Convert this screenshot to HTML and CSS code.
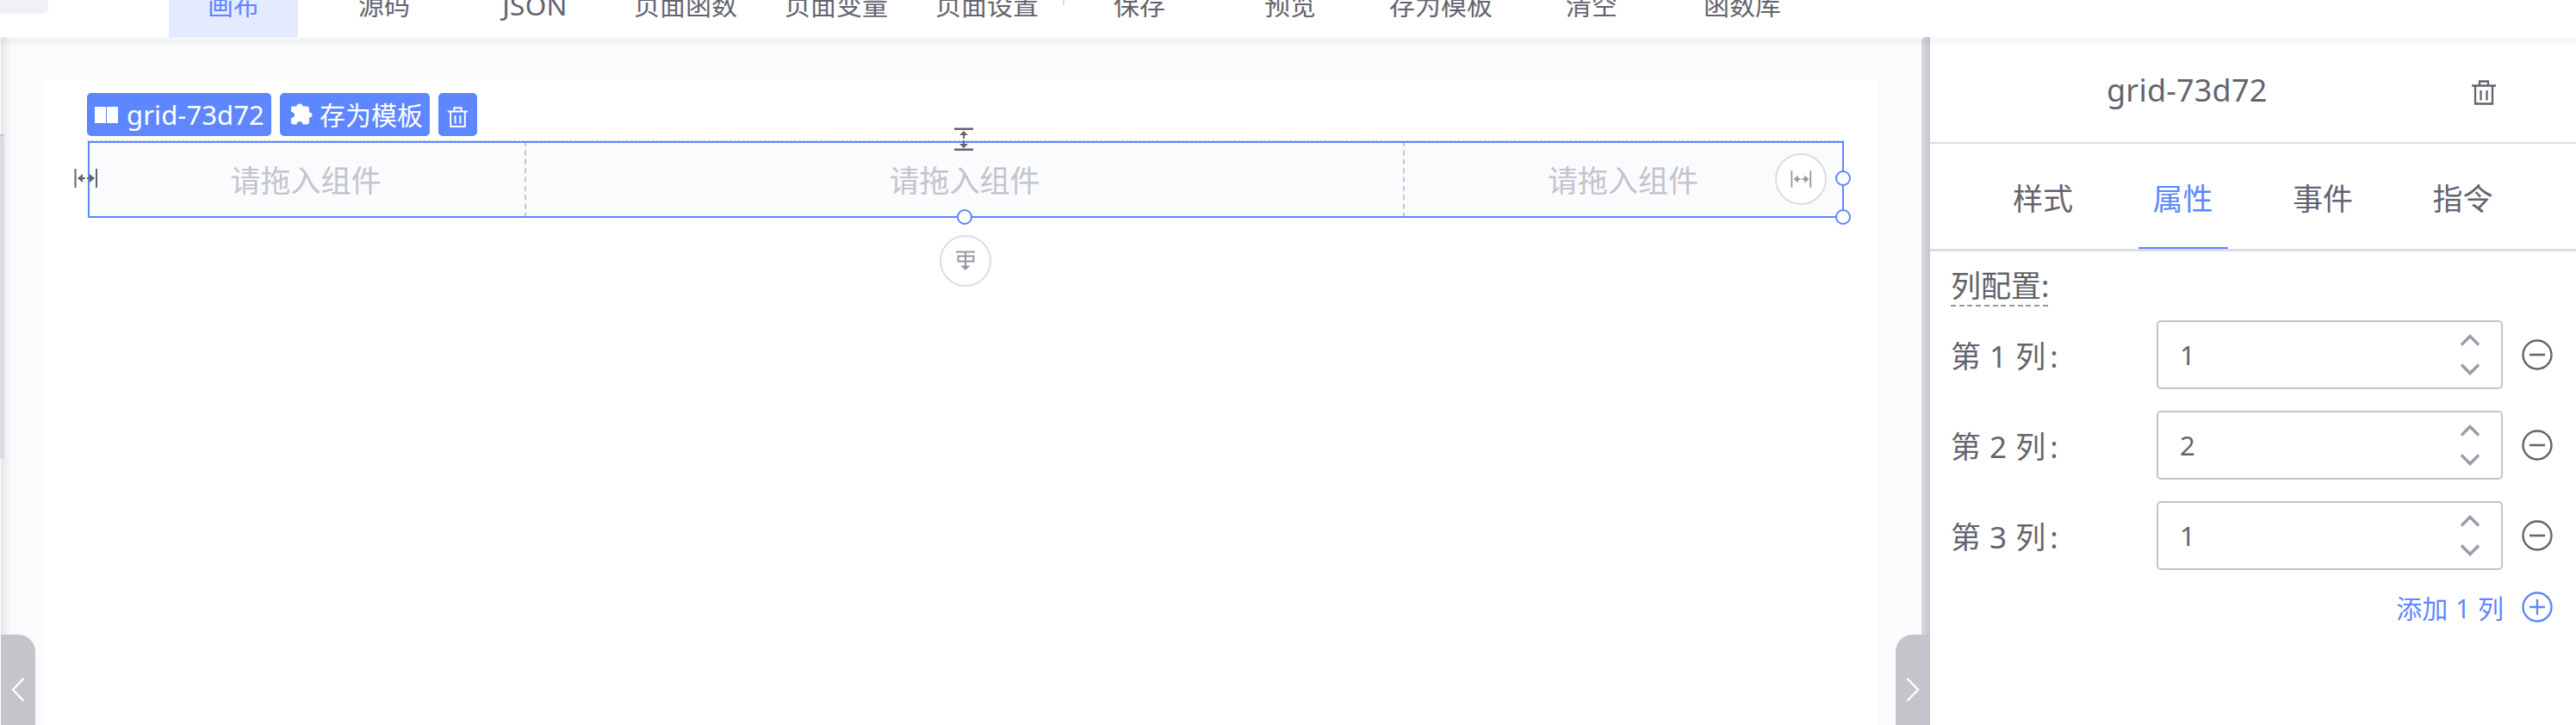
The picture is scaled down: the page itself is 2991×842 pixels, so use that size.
FILE: index.html
```html
<!DOCTYPE html>
<html lang="zh-CN">
<head>
<meta charset="utf-8">
<title>grid-73d72</title>
<link rel="stylesheet" href="styles.css">
</head>
<body>
<svg class="defs" width="0" height="0">
  <symbol id="trash" viewBox="0 0 30 30"><path d="M1 6.500h28M10 6V1.500h10V6M5 7v20.500h20V7M11.500 12v11.500M18.500 12v11.500" fill="none" stroke="currentColor" stroke-width="2.300"/></symbol>
  <symbol id="hspan" viewBox="0 0 28 22"><path d="M1.500 0v22M26 0v22" stroke="currentColor" stroke-width="2" fill="none"/><path d="M4 11l6-5v4h3v2h-3v4zM24 11l-6-5v4h-3v2h3v4z" fill="currentColor"/></symbol>
  <symbol id="vspan" viewBox="0 0 22 28"><path d="M0 1.800h22M0 25.800h22" stroke="currentColor" stroke-width="2.400" fill="none"/><path d="M11 4l5 5h-4v4h-2V9H6zM11 24l5-5h-4v-4h-2v4H6z" fill="currentColor"/></symbol>
  <symbol id="down" viewBox="0 0 24 24"><path d="M1 1.500h22M12 1.500V19M3.500 6.500h18v6h-18z" stroke="currentColor" stroke-width="2" fill="none"/><path d="M6.500 17.500h11L12 23z" fill="currentColor"/></symbol>
  <symbol id="minus" viewBox="0 0 36 36"><path d="M9 18h18" stroke="currentColor" stroke-width="2.600"/><circle cx="18" cy="18" r="16.500" fill="none" stroke="currentColor" stroke-width="2.400"/></symbol>
  <symbol id="plus" viewBox="0 0 36 36"><path d="M9 18h18M18 9v18" stroke="currentColor" stroke-width="2.400"/><circle cx="18" cy="18" r="16.500" fill="none" stroke="currentColor" stroke-width="2.400"/></symbol>
  <symbol id="spin" viewBox="0 0 22 48"><path d="M1 12.500L11 2.500L21 12.500M1 35.500L11 45.500L21 35.500" fill="none" stroke="currentColor" stroke-width="3.400"/></symbol>
</svg>
<div class="app">
  <header class="topbar">
    <div class="logo"></div>
    <nav class="menu">
      <span class="item active"><b>画布</b></span>
      <span class="item"><b>源码</b></span>
      <span class="item"><b class="latin">JSON</b></span>
      <span class="item"><b>页面函数</b></span>
      <span class="item"><b>页面变量</b></span>
      <span class="item"><b>页面设置</b></span>
      <i class="sep"></i>
      <span class="item"><b>保存</b></span>
      <span class="item"><b>预览</b></span>
      <span class="item"><b>存为模板</b></span>
      <span class="item"><b>清空</b></span>
      <span class="item"><b>函数库</b></span>
    </nav>
  </header>
  <div class="main">
    <section class="canvas">
      <div class="page">
        <div class="tags">
          <span class="tag tag-name"><svg width="27" height="19" viewBox="0 0 27 19"><path d="M0 0h13v19H0zM14 0h13v19H14z" fill="currentColor"/></svg>grid-73d72</span>
          <span class="tag tag-save"><svg width="26" height="26" viewBox="0 0 26 26"><path d="M2 3.500h5.500C7.500 1.500 9 .5 11 .5s3.500 1 3.500 3H19a3 3 0 0 1 3 3v4c2 0 3.500 1 3.500 3s-1.500 3-3.500 3v5a3 3 0 0 1-3 3h-4.500c0-2-1.500-3.500-3.500-3.500S7.500 22.500 7.500 24.500H3a2.500 2.500 0 0 1-2-2.500v-5c2 0 4-1.500 4-3.500S3 10 1 10V5c0-.8.300-1.300 1-1.500z" fill="currentColor"/></svg><span>存为模板</span></span>
          <span class="tag tag-del"><svg width="25" height="27"><use href="#trash"/></svg></span>
        </div>
        <div class="grid">
          <div class="cell">请拖入组件</div>
          <div class="cell">请拖入组件</div>
          <div class="cell">请拖入组件</div>
          <div class="outline"></div>
          <svg class="pad-left" width="28" height="22"><use href="#hspan"/></svg>
          <svg class="pad-top" width="22" height="28"><use href="#vspan"/></svg>
          <div class="round round-right"><svg width="25" height="20"><use href="#hspan"/></svg></div>
          <div class="round round-bottom"><svg width="24" height="24"><use href="#down"/></svg></div>
          <i class="knob knob-e"></i><i class="knob knob-se"></i><i class="knob knob-s"></i>
        </div>
      </div>
    </section>
    <div class="splitter"></div>
    <aside class="panel">
      <div class="panel-head"><span class="title">grid-73d72</span><svg class="del" width="30" height="30"><use href="#trash"/></svg></div>
      <div class="tabs"><span class="tab">样式</span><span class="tab on">属性</span><span class="tab">事件</span><span class="tab">指令</span></div>
      <div class="form">
        <div class="caption"><span>列配置:</span></div>
        <div class="row"><label>第 1 列<em>:</em></label><div class="num"><span>1</span><svg width="22" height="48"><use href="#spin"/></svg></div><svg class="op" width="36" height="36"><use href="#minus"/></svg></div>
        <div class="row"><label>第 2 列<em>:</em></label><div class="num"><span>2</span><svg width="22" height="48"><use href="#spin"/></svg></div><svg class="op" width="36" height="36"><use href="#minus"/></svg></div>
        <div class="row"><label>第 3 列<em>:</em></label><div class="num"><span>1</span><svg width="22" height="48"><use href="#spin"/></svg></div><svg class="op" width="36" height="36"><use href="#minus"/></svg></div>
        <div class="add"><span>添加 1 列</span><svg width="36" height="36"><use href="#plus"/></svg></div>
      </div>
    </aside>
    <div class="left-shadow"></div>
    <div class="left-thumb"></div>
    <div class="top-shadow"></div>
    <div class="fold fold-left"><svg width="16" height="28" viewBox="0 0 16 28"><path d="M14.500 1L2 14L14.500 27" fill="none" stroke="#fff" stroke-width="2.400"/></svg></div>
    <div class="fold fold-right"><svg width="16" height="28" viewBox="0 0 16 28"><path d="M1.500 1L14 14L1.500 27" fill="none" stroke="#fff" stroke-width="2.400"/></svg></div>
  </div>
</div>
</body>
</html>
```
FILE: styles.css
```css
* { box-sizing: border-box; }
body {
  margin: 0;
  background: #fff;
  color: #64646e;
  font-family: "Noto Sans", "Noto Sans CJK SC", sans-serif;
  font-size: 35px;
}
svg { display: block; flex: none; }
.defs { position: absolute; }
.app { width: 2991px; height: 842px; overflow: hidden; display: flex; flex-direction: column; }

.topbar { height: 43px; display: flex; align-items: flex-end; flex: none; }
.logo { width: 56px; height: 16px; margin-right: 127.500px; align-self: flex-start; background: #f0f1f5; border-radius: 0 0 6px 0; }
.menu { display: flex; height: 43px; align-items: flex-end; }
.item { width: 175px; padding: 0 12.500px; display: flex; height: 74px; }
.item b { flex: 1; font-size: 30px; font-weight: 400; line-height: 74px; text-align: center; white-space: nowrap; }
.item .latin { font-size: 31.500px; letter-spacing: .3px; }
.item.active b { background: #e4eaff; color: #5e87ff; }
.sep { width: 2px; height: 6px; align-self: flex-start; background: #dcdce4; }

.main { position: relative; flex: 1; display: flex; min-height: 0; }
.top-shadow { position: absolute; left: 0; right: 0; top: 0; height: 11px; background: linear-gradient(rgba(0,0,0,.015), rgba(0,0,0,.038) 40%, rgba(0,0,0,.035) 55%, transparent); }
.left-shadow { position: absolute; left: 1px; top: 0; width: 12px; height: 100%; background: linear-gradient(90deg, rgba(0,0,0,.09), rgba(0,0,0,.06) 35%, transparent); }
.left-thumb { position: absolute; left: 0; top: 113px; width: 5px; height: 377px; background: #dcdce4; border-top: 2px solid #c8c8ca; }
.canvas { width: 2230px; margin-left: 1px; background: #fafbfd; padding: 50px 50px 0; display: flex; }
.page { flex: 1; background: #fff; padding: 15px 40px 0 50px; }
.tags { display: flex; gap: 10px; height: 50px; color: #fff; font-size: 30px; }
.tag { display: flex; align-items: center; height: 50px; border-radius: 5px; background: #5e87ff; white-space: nowrap; line-height: 50px; }
.tag-name { width: 214px; padding-left: 9px; gap: 10px; font-size: 31px; letter-spacing: .1px; }
.tag-save { width: 174px; padding-left: 12px; gap: 8px; }
.tag-save span { padding-top: 2px; }
.tag-del { width: 45px; justify-content: center; padding-top: 7px; }

.grid { position: relative; margin-top: 5px; height: 90px; display: grid; grid-template-columns: 1fr 2fr 1fr; background: #fafbfd; border-top: 1px dashed #c4c4cc; }
.cell { display: flex; align-items: center; justify-content: center; color: #c4c4cc; border-right: 2px dashed #c4c6cc; padding: 0 0 3px; }
.cell:nth-child(3) { border-right: 0; padding-right: 3px; }
.outline { position: absolute; left: 1px; top: 0; right: 0; bottom: 0; border: 2px solid #5e87ff; }
.pad-left { position: absolute; left: -15px; top: 32px; }
.pad-top { position: absolute; left: 1007px; top: -16px; }
.round { position: absolute; width: 60px; height: 60px; border: 2px solid #dcdce4; border-radius: 50%; background: #fff; color: #9696a2; display: flex; align-items: center; justify-content: center; }
.round-right { left: 1960px; top: 14px; }
.round-bottom { left: 990px; top: 109px; }
.knob { position: absolute; width: 18px; height: 18px; border: 2px solid #5e87ff; border-radius: 50%; background: #fff; }
.knob-e { left: 2030px; top: 34px; }
.knob-se { left: 2030px; top: 79px; }
.knob-s { left: 1010px; top: 79px; }

.splitter { width: 10px; border-radius: 5px 0 0 0; background: linear-gradient(90deg, #d8d8e0, #c6c6ce); }
.panel { flex: 1; display: flex; flex-direction: column; background: #fff; }
.panel-head { height: 124px; border-bottom: 2px solid #dcdce4; display: flex; align-items: center; padding-left: 205px; }
.title { width: 190px; font-size: 36px; letter-spacing: .2px; white-space: nowrap; line-height: 50px; margin-top: 1px; }
.del { margin: 7px 0 0 233px; }
.tabs { height: 125px; border-bottom: 3px solid #dcdce4; display: flex; gap: 58.500px; padding-left: 79px; }
.tab { width: 104px; height: 122px; line-height: 127px; text-align: center; }
.tab.on { color: #5e87ff; border-bottom: 2px solid #5e87ff; }
.form { padding: 18px 27px 0 24px; }
.caption { height: 62px; color: #606266; line-height: 44px; }
.caption span { display: inline-block; height: 46px; width: 114px; white-space: nowrap; background: repeating-linear-gradient(90deg, #9696a2 0 6px, transparent 6px 9.700px) left bottom / 100% 2px no-repeat; }
.row { display: flex; align-items: center; height: 80px; margin-bottom: 25px; }
.row label { width: 239px; white-space: nowrap; word-spacing: 1px; padding-bottom: 2px; }
.row em { font-style: normal; margin-left: 5px; }
.num { width: 402px; height: 80px; border: 2px solid #c4c4cc; border-radius: 5px; padding: 0 25px 0 25px; display: flex; align-items: center; justify-content: space-between; font-size: 31px; }
.num svg { color: #9a9ca8; }
.op { margin-left: 22px; }
.add { display: flex; align-items: center; justify-content: flex-end; gap: 21px; height: 36px; margin-top: 4px; font-size: 30px; word-spacing: 1px; color: #5e87ff; white-space: nowrap; }

.fold { position: absolute; top: 694px; width: 40px; height: 128px; background: #c4c4ca; display: flex; justify-content: center; align-items: center; }
.fold-left { left: 1px; border-radius: 0 20px 0 0; }
.fold-right { left: 2201px; border-radius: 20px 0 0 0; }
```
